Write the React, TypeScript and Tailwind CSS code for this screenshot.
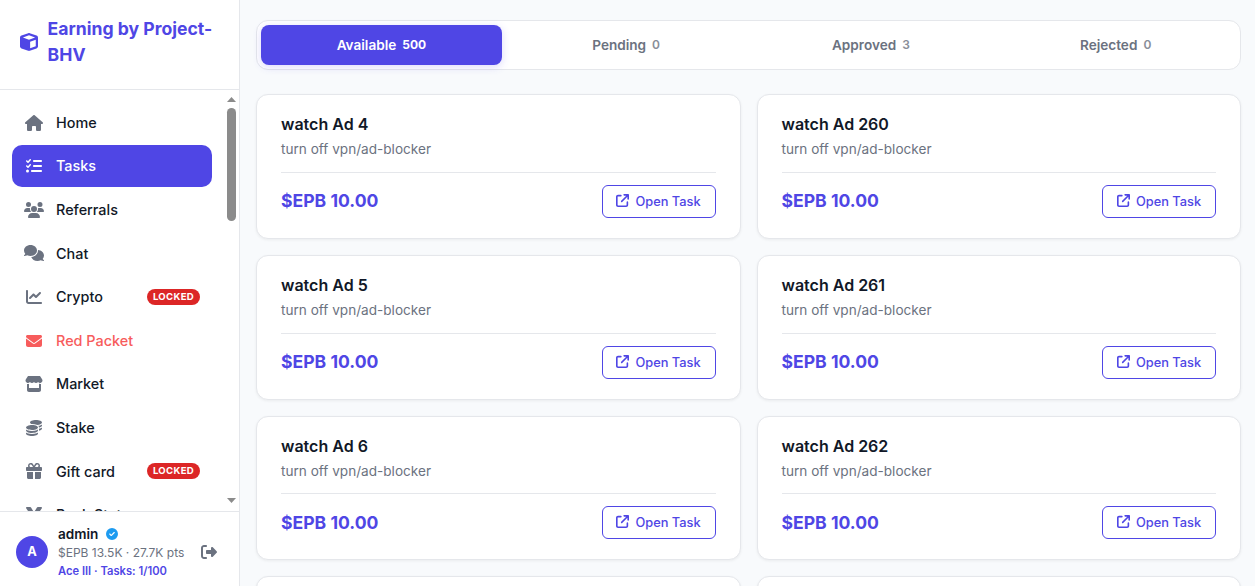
import type { IconType } from 'react-icons'
import {
  FaArrowUpRightFromSquare,
  FaChartLine,
  FaCircleCheck,
  FaCoins,
  FaComments,
  FaCube,
  FaEnvelope,
  FaGift,
  FaHouse,
  FaListCheck,
  FaMedal,
  FaRightFromBracket,
  FaStore,
  FaUsers,
} from 'react-icons/fa6'

type NavItem = {
  label: string
  icon: IconType
  size?: string
  active?: boolean
  locked?: boolean
  danger?: boolean
}

const navItems: NavItem[] = [
  { label: 'Home', icon: FaHouse, size: 'h-4 w-[18px]' },
  { label: 'Tasks', icon: FaListCheck, active: true },
  { label: 'Referrals', icon: FaUsers, size: 'h-4 w-5' },
  { label: 'Chat', icon: FaComments, size: 'h-4 w-5' },
  { label: 'Crypto', icon: FaChartLine, locked: true },
  { label: 'Red Packet', icon: FaEnvelope, danger: true },
  { label: 'Market', icon: FaStore, size: 'h-4 w-[18px]' },
  { label: 'Stake', icon: FaCoins },
  { label: 'Gift card', icon: FaGift, locked: true },
  { label: 'Rank Stats', icon: FaMedal },
]

const tabs = [
  { label: 'Available', count: 500 },
  { label: 'Pending', count: 0 },
  { label: 'Approved', count: 3 },
  { label: 'Rejected', count: 0 },
]

const tasks = [4, 260, 5, 261, 6, 262, 7, 263]

function NavLink({ item }: { item: NavItem }) {
  const Icon = item.icon
  const color = item.active
    ? 'bg-[#4f46e5] text-white'
    : item.danger
      ? 'text-[#f75c5c]'
      : 'text-[#111827]'
  const iconColor = item.active || item.danger ? '' : 'text-[#6b7280]'

  return (
    <a className={`mb-[2px] flex h-[41.6px] shrink-0 items-center gap-3 rounded-[10px] px-3 ${color}`}>
      <span className={`flex w-5 shrink-0 justify-center ${iconColor}`}>
        <Icon className={item.size ?? 'size-4'} />
      </span>
      <span className="text-[14.4px] font-medium">{item.label}</span>
      {item.locked && (
        <span className="ml-auto rounded-full bg-[#dc2626] px-1.5 text-[9.6px] leading-4 font-bold tracking-[0.3px] text-white">
          LOCKED
        </span>
      )}
    </a>
  )
}

function Sidebar() {
  return (
    <aside className="flex w-60 shrink-0 flex-col border-r border-[#e5e7eb] bg-white">
      <div className="flex h-[90px] shrink-0 items-start border-b border-[#e5e7eb] px-5 pt-4">
        <div className="flex items-center gap-[9.6px] text-[17.6px] leading-[26.4px] font-bold text-[#4f46e5]">
          <FaCube className="size-[18px] shrink-0" />
          <span>Earning by Project-BHV</span>
        </div>
      </div>

      <div className="flex min-h-0 flex-1">
        <nav className="flex min-w-0 flex-1 flex-col overflow-hidden pt-[11.8px] pl-3">
          {navItems.map(item => (
            <NavLink key={item.label} item={item} />
          ))}
        </nav>
        {/* Scrollbar */}
        <div className="ml-3 flex w-[15px] shrink-0 flex-col items-center pt-[7px] pb-2">
          <svg className="h-[5px] w-[9px]" viewBox="0 0 9 5" fill="#8b8b8b">
            <path d="M4.5 0L9 5H0z" />
          </svg>
          <div className="mt-[6px] h-[113px] w-[9px] rounded-full bg-[#8b8b8b]" />
          <svg className="mt-auto h-[5px] w-[9px]" viewBox="0 0 9 5" fill="#8b8b8b">
            <path d="M0 0h9L4.5 5z" />
          </svg>
        </div>
      </div>

      <div className="flex h-[75px] shrink-0 items-center border-t border-[#e5e7eb] pt-[6px] pl-4">
        <div className="flex size-8 shrink-0 items-center justify-center rounded-full bg-[#4f46e5] text-[12.8px] font-bold text-white">
          A
        </div>
        <div className="ml-[10px] w-[143px]">
          <div className="flex items-center gap-2 text-[13.6px] leading-[18px] font-semibold text-[#111827]">
            admin
            <FaCircleCheck className="size-3 text-[#1d9bf0]" />
          </div>
          <p className="mt-px text-[12px] leading-[18px] text-[#6b7280]">$EPB 13.5K · 27.7K pts</p>
          <p className="-mb-px text-[11.2px] leading-[18px] font-semibold text-[#4f46e5]">Ace III · Tasks: 1/100</p>
        </div>
        <FaRightFromBracket className="size-4 text-[#6b7280]" />
      </div>
    </aside>
  )
}

function TaskCard({ id }: { id: number }) {
  return (
    <div className="h-[144.8px] rounded-xl border border-[#e5e7eb] bg-white px-6 pt-[17px] shadow-[0_1px_3px_rgba(0,0,0,0.06)]">
      <h3 className="text-[16px] leading-6 font-semibold text-[#111827]">watch Ad {id}</h3>
      <p className="mt-[3px] text-[13.6px] leading-5 text-[#6b7280]">turn off vpn/ad-blocker</p>
      <div className="mt-[12.8px] flex items-center justify-between border-t border-[#e5e7eb] pt-3">
        <span className="text-[17.6px] font-bold text-[#4f46e5]">$EPB 10.00</span>
        <button className="flex h-[33px] w-[114px] items-center justify-center gap-1.5 rounded-md border border-[#4f46e5] text-[12.8px] font-medium text-[#4f46e5]">
          <FaArrowUpRightFromSquare className="mb-0.5 size-[13px]" />
          Open Task
        </button>
      </div>
    </div>
  )
}

export default function App() {
  return (
    <div className="flex h-[586px] overflow-hidden bg-[#f8fafc] font-['Inter',sans-serif]">
      <Sidebar />
      <main className="min-w-0 flex-1 overflow-hidden pt-5 pr-[14px] pl-4">
        <div className="mb-6 flex h-[50px] gap-1 rounded-xl border border-[#e5e7eb] bg-white p-1">
          {tabs.map((tab, i) => (
            <button
              key={tab.label}
              className={`flex flex-1 items-center justify-center gap-1.5 rounded-lg text-[13.6px] font-semibold ${
                i === 0
                  ? 'bg-[#4f46e5] text-white shadow-[0_2px_8px_rgba(79,70,229,0.2)]'
                  : 'text-[#6b7280]'
              }`}
            >
              {tab.label}
              <span className={`text-[12px] ${i === 0 ? 'font-bold' : 'opacity-80'}`}>{tab.count}</span>
            </button>
          ))}
        </div>

        <div className="grid grid-cols-2 gap-4">
          {tasks.map(id => (
            <TaskCard key={id} id={id} />
          ))}
        </div>
      </main>
    </div>
  )
}
